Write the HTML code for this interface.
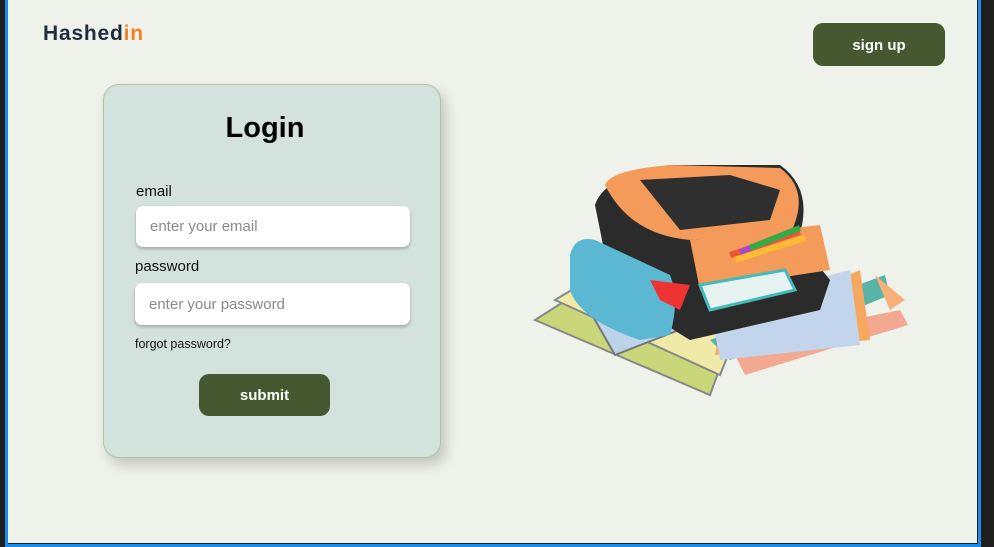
<!DOCTYPE html>
<html><head><style>
*{margin:0;padding:0;box-sizing:border-box}
body{width:994px;height:547px;background:#1e1e1e;position:relative;overflow:hidden;font-family:"Liberation Sans",sans-serif}
.frame{position:absolute;left:5px;top:-4px;width:976px;height:551px;border:3px solid #1a8cf0;border-top:none;}
.page{position:absolute;left:8px;top:0;width:969px;height:543px;background:#eff1eb}
.abs{position:absolute}
.logo{left:43px;top:22px;font-size:21px;font-weight:bold;color:#1f2d3d;letter-spacing:0.8px}
.logo span{color:#f58220}
.btn{background:#46582f;color:#fff;font-weight:bold;font-size:15px;border-radius:10px;display:flex;align-items:center;justify-content:center}
.card{left:103px;top:84px;width:338px;height:374px;background:#d3e2dd;border:1px solid #b5c2a8;border-radius:16px;box-shadow:5px 7px 12px rgba(0,0,0,0.18)}
.inp{background:#fff;border-radius:7px;box-shadow:0 2px 3px rgba(0,0,0,0.25);color:#8a8a8a;font-size:15px;padding-left:14px;display:flex;align-items:center}
.lbl{font-size:15px;color:#111}
</style></head><body>
<div class="frame"></div>
<div class="page"></div>
<div class="abs logo">Hashed<span>in</span></div>
<div class="abs btn" style="left:813px;top:23px;width:132px;height:43px;padding-top:2px">sign up</div>
<div class="abs card"></div>
<div class="abs" style="left:96px;top:112px;width:338px;text-align:center;font-size:29px;font-weight:bold;color:#000">Login</div>
<div class="abs lbl" style="left:136px;top:183px">email</div>
<div class="abs inp" style="left:136px;top:206px;width:274px;height:41px">enter your email</div>
<div class="abs lbl" style="left:135px;top:258px">password</div>
<div class="abs inp" style="left:135px;top:283px;width:275px;height:42px">enter your password</div>
<div class="abs" style="left:135px;top:337px;font-size:12.5px;color:#111">forgot password?</div>
<div class="abs btn" style="left:199px;top:374px;width:131px;height:42px">submit</div>
<svg class="abs" style="left:530px;top:160px" width="385" height="240" viewBox="0 0 385 240">
<polygon points="5,160 60,125 200,180 180,235" fill="#c9d77a" stroke="#888" stroke-width="2"/>
<polygon points="25,140 75,110 210,165 190,215" fill="#f0e9a8" stroke="#888" stroke-width="2"/>
<polygon points="45,125 95,100 200,150 85,195" fill="#bcd3ea" stroke="#777" stroke-width="2"/>
<polygon points="200,185 370,150 378,165 215,215" fill="#f2a98f"/>
<polygon points="180,180 355,115 360,135 200,200" fill="#58b3a8"/>
<polygon points="190,170 330,110 340,180 185,195" fill="#f7a860"/>
<polygon points="180,145 320,110 330,185 190,200" fill="#c3d5ec"/>
<polygon points="345,115 375,140 360,150" fill="#f6b07a"/>
<path d="M65,45 Q75,15 140,5 L250,5 Q285,30 268,80 L300,120 L290,150 L160,180 Q110,150 80,120 Z" fill="#2b2b2b"/>
<path d="M75,25 Q80,10 140,5 L250,8 Q280,30 262,70 L160,80 Q100,75 75,25 Z" fill="#f49a5b"/>
<path d="M110,20 L200,15 L250,30 L240,60 L150,70 Z" fill="#2f2f2f"/>
<path d="M160,80 L290,65 L300,110 L170,130 Z" fill="#f49a5b"/>
<g stroke-width="6"><line x1="200" y1="95" x2="270" y2="72" stroke="#e53"/><line x1="205" y1="100" x2="275" y2="78" stroke="#fb3"/><line x1="210" y1="92" x2="265" y2="70" stroke="#a4c"/><line x1="220" y1="88" x2="270" y2="68" stroke="#3a4"/></g>
<path d="M170,125 L255,110 L265,130 L180,150 Z" fill="#e7f3f1" stroke="#4bb" stroke-width="3"/>
<path d="M40,95 Q45,75 65,80 L140,115 Q150,140 140,175 L110,180 Q50,160 40,130 Z" fill="#5bb8d3"/>
<path d="M120,120 L160,125 L150,150 L130,140 Z" fill="#e33"/>
</svg>
</body></html>
